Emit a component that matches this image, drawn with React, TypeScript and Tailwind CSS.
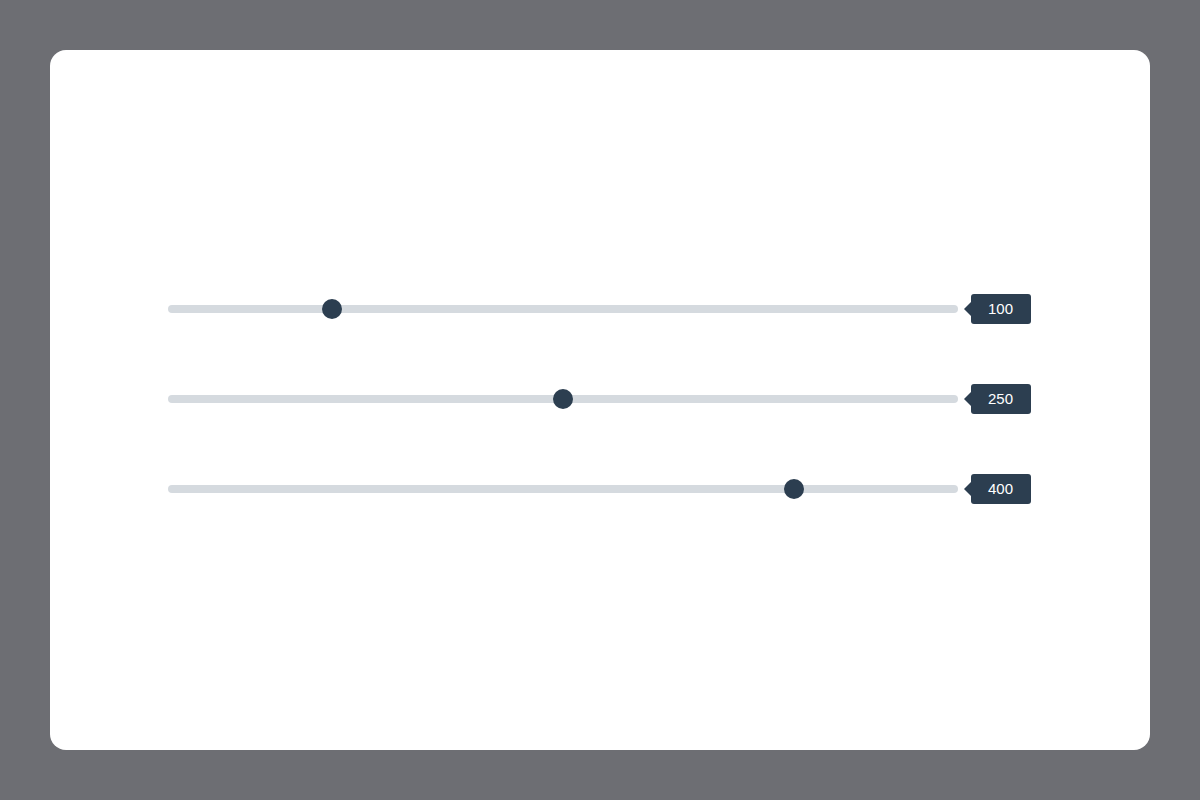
import { useState } from 'react';

function RangeRow({ initial }: { initial: number }) {
    const [value, setValue] = useState(initial);

    return (
        <div className="flex items-center h-[30px]">
            <input
                type="range"
                min={0}
                max={500}
                value={value}
                onChange={(e) => setValue(Number(e.target.value))}
                className="w-[790px] h-2 m-0 appearance-none rounded-full bg-[#d5dadf] outline-none cursor-pointer [&::-webkit-slider-thumb]:appearance-none [&::-webkit-slider-thumb]:w-5 [&::-webkit-slider-thumb]:h-5 [&::-webkit-slider-thumb]:rounded-full [&::-webkit-slider-thumb]:bg-[#2c3e50] [&::-webkit-slider-thumb]:border-0 [&::-moz-range-thumb]:w-5 [&::-moz-range-thumb]:h-5 [&::-moz-range-thumb]:rounded-full [&::-moz-range-thumb]:bg-[#2c3e50] [&::-moz-range-thumb]:border-0"
            />
            <div className="relative ml-[13px] w-[60px] h-[30px] flex items-center justify-center rounded-[3px] bg-[#2c3e50] text-white text-[15px] font-['Liberation_Sans',Arial,sans-serif]">
                {/* pointer toward the track */}
                <span className="absolute left-[-7px] top-1/2 -translate-y-1/2 w-0 h-0 border-y-[7px] border-y-transparent border-r-[7px] border-r-[#2c3e50]" />
                {value}
            </div>
        </div>
    );
}

export default function App() {
    return (
        <div className="min-h-screen bg-[#6d6e73] p-[50px] font-['Liberation_Sans',Arial,sans-serif]">
            <div className="w-[1100px] h-[700px] bg-white rounded-2xl flex flex-col items-center justify-center gap-[60px] pb-[2px] pr-[2px]">
                <RangeRow initial={100} />
                <RangeRow initial={250} />
                <RangeRow initial={400} />
            </div>
        </div>
    );
}
